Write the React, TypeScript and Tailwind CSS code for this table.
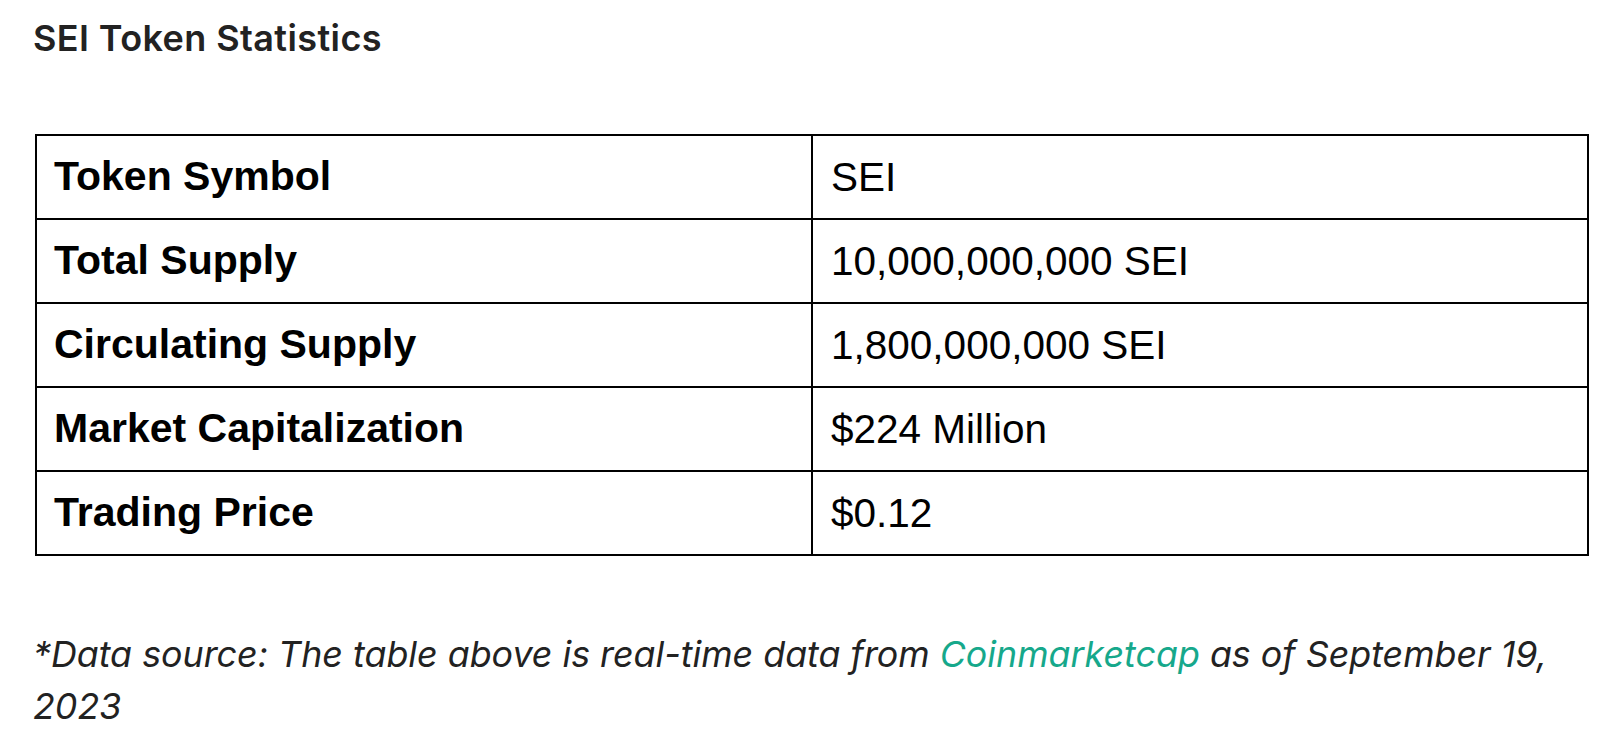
const rows: [string, string][] = [
  ["Token Symbol", "SEI"],
  ["Total Supply", "10,000,000,000 SEI"],
  ["Circulating Supply", "1,800,000,000 SEI"],
  ["Market Capitalization", "$224 Million"],
  ["Trading Price", "$0.12"],
];

export default function App() {
  return (
    <div className="min-h-screen bg-white pl-[33px] pt-[14px] text-[#222]">
      <h2 className="font-['Inter',sans-serif] text-[36px] font-semibold leading-[48px] tracking-[0.4px]">
        SEI Token Statistics
      </h2>

      <table className="mt-[72px] ml-[2px] w-[1554px] table-fixed border-collapse font-['Liberation_Sans',Arial,sans-serif] text-[41px] text-black">
        <tbody>
          {rows.map(([label, value]) => (
            <tr key={label} className="h-[84px]">
              <td className="w-1/2 border-2 border-black px-[17px] font-bold">{label}</td>
              <td className="w-1/2 border-2 border-black px-[18px] text-[40.5px]">{value}</td>
            </tr>
          ))}
        </tbody>
      </table>

      <p className="mt-[72px] w-[1556px] font-['Inter',sans-serif] text-[35.8px] italic leading-[52px]">
        <span>*Data source: The table above is real-time data from </span>
        <a href="#" className="text-[#16a88b]">
          Coinmarketcap
        </a>
        <span> as of September 19, </span>
        <span className="inline-block">2023</span>
      </p>
    </div>
  );
}
